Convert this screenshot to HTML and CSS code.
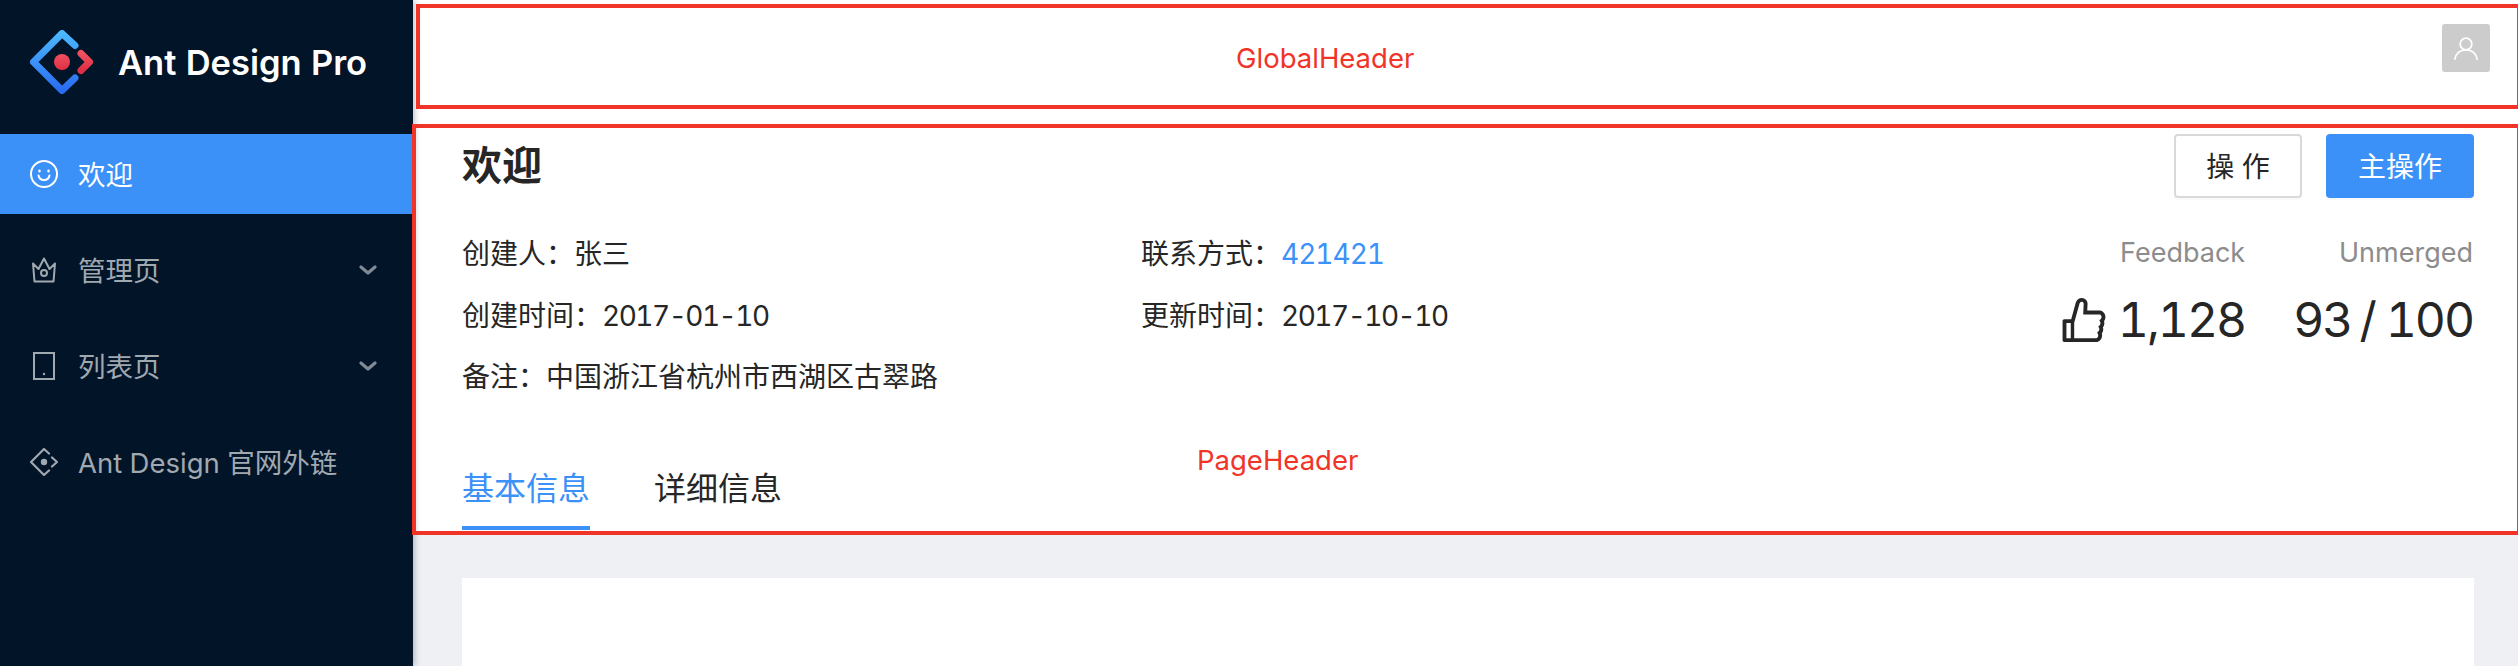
FILE: index.html
```html
<!DOCTYPE html>
<html lang="zh-CN">

<head>
  <meta charset="UTF-8">
  <title>Ant Design Pro</title>
  <link rel="stylesheet" href="styles.css">
</head>

<body>
  <div class="app">
    <aside class="sider">
      <div class="logo">
        <svg class="logo-mark" viewBox="0 0 64 64" fill="none" stroke-linecap="round" stroke-linejoin="round">
          <defs>
            <linearGradient id="logo-blue" x1="0" y1="0" x2="0" y2="1">
              <stop offset="0" stop-color="#4bb8ff" />
              <stop offset="1" stop-color="#2a6cf0" />
            </linearGradient>
            <linearGradient id="logo-red" x1="0" y1="0" x2="0" y2="1">
              <stop offset="0" stop-color="#f0505f" />
              <stop offset="1" stop-color="#dd2f45" />
            </linearGradient>
          </defs>
          <path d="M45 15.500 32 3.500 3.500 32 32 60.500 45 48" stroke="url(#logo-blue)" stroke-width="7" />
          <path d="M51 23.500 59.500 32 51 40.500" stroke="url(#logo-red)" stroke-width="7" />
          <circle cx="32" cy="32" r="8" fill="url(#logo-red)" />
        </svg>
        <span class="logo-title">Ant Design Pro</span>
      </div>
      <nav class="menu">
        <a class="menu-item selected">
          <svg class="menu-icon" viewBox="0 0 28 28" fill="none" stroke="currentColor" stroke-width="2" stroke-linecap="round">
            <circle cx="14" cy="14" r="13" />
            <path d="M8.500 15.500c.6 3 2.800 4.500 5.500 4.500s4.900-1.500 5.500-4.500" />
            <path d="M9.500 10.800v.4M18.500 10.800v.4" stroke-width="2.400" />
          </svg>
          <span class="menu-text">欢迎</span>
        </a>
        <a class="menu-item">
          <svg class="menu-icon" viewBox="0 0 28 28" fill="none" stroke="currentColor" stroke-width="2" stroke-linejoin="round">
            <path d="M3 7.500 8.500 13 14 2.500 19.500 13 25 7.500 23.500 25.500H4.500Z" />
            <circle cx="14" cy="17" r="3" />
          </svg>
          <span class="menu-text">管理页</span>
          <svg class="menu-arrow" viewBox="0 0 18 10" fill="none" stroke="currentColor" stroke-width="3.200" stroke-linecap="round" stroke-linejoin="round">
            <path d="M2 2 9 8 16 2" />
          </svg>
        </a>
        <a class="menu-item">
          <svg class="menu-icon" viewBox="0 0 28 28" fill="none" stroke="currentColor" stroke-width="2">
            <rect x="4" y="1" width="20" height="26" />
            <circle cx="14" cy="22" r="1.200" fill="currentColor" stroke="none" />
          </svg>
          <span class="menu-text">列表页</span>
          <svg class="menu-arrow" viewBox="0 0 18 10" fill="none" stroke="currentColor" stroke-width="3.200" stroke-linecap="round" stroke-linejoin="round">
            <path d="M2 2 9 8 16 2" />
          </svg>
        </a>
        <a class="menu-item">
          <svg class="menu-icon" viewBox="0 0 28 28" fill="none" stroke="currentColor" stroke-width="2.200" stroke-linecap="round" stroke-linejoin="round">
            <path d="M19 5.500 14 1 1 14 14 27 19 22.500" />
            <path d="M22 9.500 27 14 22 18.500" />
            <circle cx="14" cy="14" r="3.200" fill="currentColor" stroke="none" />
          </svg>
          <span class="menu-text">Ant Design 官网外链</span>
        </a>
      </nav>
    </aside>

    <div class="layout">
      <header class="global-header">
        <span class="avatar">
          <svg viewBox="0 0 24 24" fill="none" stroke="currentColor" stroke-width="1.500" stroke-linecap="round">
            <circle cx="12" cy="8.500" r="5" />
            <path d="M2.500 21.500c.5-4.500 4.500-8 9.500-8s9 3.500 9.500 8" />
          </svg>
        </span>
      </header>

      <section class="page-header">
        <div class="title-row">
          <h1 class="page-title">欢迎</h1>
          <div class="actions">
            <button class="btn">操 作</button>
            <button class="btn primary">主操作</button>
          </div>
        </div>
        <div class="info-row">
          <dl class="desc">
            <div>创建人：<span>张三</span></div>
            <div>联系方式：<a class="link">421421</a></div>
            <div>创建时间：<span class="date">2017-01-10</span></div>
            <div>更新时间：<span class="date">2017-10-10</span></div>
            <div class="desc-wide">备注：<span>中国浙江省杭州市西湖区古翠路</span></div>
          </dl>
          <div class="stats">
            <div class="stat">
              <div class="stat-label">Feedback</div>
              <div class="stat-value">
                <svg class="like" viewBox="64 64 896 896" fill="currentColor">
                  <path d="M885.9 533.7c16.8-22.2 26.1-49.4 26.1-77.7 0-44.9-25.1-87.4-65.5-111.1a67.67 67.67 0 0 0-34.3-9.3H572.4l6-122.9c1.4-29.7-9.1-57.9-29.5-79.4A106.62 106.62 0 0 0 471 99.9c-52 0-98 35-111.8 85.1l-85.9 311H144c-17.7 0-32 14.3-32 32v364c0 17.7 14.3 32 32 32h601.3c9.2 0 18.2-1.8 26.5-5.4 47.6-20.3 78.3-66.8 78.3-118.4 0-12.6-1.8-25-5.4-37 16.8-22.2 26.1-49.4 26.1-77.7 0-12.6-1.8-25-5.4-37 16.8-22.2 26.1-49.4 26.1-77.7-.2-12.6-2-25.1-5.6-37.1zM184 852V568h81v284h-81zm636.4-353l-21.9 19 13.9 25.4a56.2 56.2 0 0 1 6.9 27.3c0 16.5-7.2 32.2-19.6 43l-21.9 19 13.9 25.4a56.2 56.2 0 0 1 6.9 27.3c0 16.5-7.2 32.2-19.6 43l-21.9 19 13.9 25.4a56.2 56.2 0 0 1 6.9 27.3c0 22.4-13.2 42.6-33.6 51.8H329V564.8l99.5-360.5a44.1 44.1 0 0 1 42.2-32.3c7.6 0 15.1 2.2 21.1 6.7 9.9 7.4 15.2 18.6 14.6 30.5l-9.6 198.4h314.4C829 418.5 840 436.9 840 456c0 16.5-7.2 32.1-19.6 43z" />
                </svg>
                1,128
              </div>
            </div>
            <div class="stat">
              <div class="stat-label">Unmerged</div>
              <div class="stat-value">93<span class="stat-suffix">/ 100</span></div>
            </div>
          </div>
        </div>
        <div class="tabs">
          <a class="tab active">基本信息</a>
          <a class="tab">详细信息</a>
        </div>
      </section>

      <main class="content">
        <div class="card"></div>
      </main>
    </div>

    <!-- red annotation frames drawn over the screenshot -->
    <div class="note note-global"><span class="note-label">GlobalHeader</span></div>
    <div class="note note-page"><span class="note-label">PageHeader</span></div>
  </div>
</body>

</html>
```

FILE: styles.css
```css
* {
  box-sizing: border-box;
}

html,
body {
  margin: 0;
  height: 100%;
  overflow: hidden;
}

body {
  font-family: Inter, "Noto Sans CJK SC", sans-serif;
  font-size: 28px;
  font-feature-settings: "tnum";
  color: #262626;
  background: #fff;
}

.app {
  position: relative;
  display: flex;
  height: 666px;
  overflow: hidden;
}

/* Sidebar */
.sider {
  position: relative;
  z-index: 1;
  flex: 0 0 413px;
  background: #021428;
  box-shadow: 2px 0 6px rgb(0 21 41 / 0.25);
}

.logo {
  display: flex;
  align-items: center;
  gap: 24px;
  height: 124px;
  padding-left: 30px;
}

.logo-mark {
  width: 64px;
  height: 64px;
}

.logo-title {
  font-size: 34.500px;
  font-weight: 600;
  color: #fff;
}

.menu {
  display: flex;
  flex-direction: column;
  gap: 16px;
  margin-top: 10px;
}

.menu-item {
  display: flex;
  align-items: center;
  gap: 20px;
  height: 80px;
  padding: 0 36px 0 30px;
  font-size: 27.500px;
  color: #a0a8b0;
}

.menu-item.selected {
  background: #3b91f8;
  color: #fff;
}

.menu-text {
  padding-bottom: 3px;
}

.menu-icon {
  flex: none;
  width: 28px;
  height: 28px;
}

.menu-arrow {
  width: 18px;
  height: 10px;
  margin-left: auto;
  color: #7f8a95;
}

/* Main column */
.layout {
  flex: 1;
  display: flex;
  flex-direction: column;
  min-width: 0;
}

.global-header {
  display: flex;
  justify-content: flex-end;
  align-items: center;
  height: 94px;
  padding: 0 28px 0 0;
  background: #fff;
  box-shadow: 0 2px 8px rgb(0 21 41 / 0.06);
}

.avatar {
  display: flex;
  align-items: center;
  justify-content: center;
  width: 48px;
  height: 48px;
  margin-top: 2px;
  border-radius: 3px;
  background: #ccc;
  color: #fff;
}

.avatar svg {
  width: 28px;
  height: 28px;
}

.page-header {
  display: flex;
  flex-direction: column;
  height: 441px;
  padding: 40px 44px 5px 49px;
  background: #fff;
}

.title-row {
  display: flex;
  justify-content: space-between;
  align-items: center;
  height: 64px;
}

.page-title {
  margin: -6px 0 0;
  font-size: 40px;
  font-weight: 600;
}

.actions {
  display: flex;
  gap: 24px;
}

.btn {
  height: 64px;
  width: 128px;
  padding: 0 0 3px;
  font: inherit;
  color: #262626;
  background: #fff;
  border: 2px solid #d9d9d9;
  border-radius: 4px;
  box-shadow: 0 2px 0 rgb(0 0 0 / 0.02);
}

.btn.primary {
  width: 148px;
  color: #fff;
  background: #3b91f8;
  border-color: #3b91f8;
}

.info-row {
  display: flex;
  justify-content: space-between;
  margin-top: 26px;
}

.desc {
  display: grid;
  grid-template-columns: 679px 400px;
  margin: 0;
  line-height: 61.500px;
}

.desc-wide {
  grid-column: 1 / -1;
}

.date {
  letter-spacing: -1.500px;
}

.link {
  letter-spacing: -1px;
  color: #3b91f8;
}

.stats {
  display: flex;
  gap: 48px;
  padding-right: 1px;
}

.stat {
  text-align: right;
}

.stat-label {
  line-height: 58px;
  font-size: 27px;
  color: #8c8c8c;
}

.stat-value {
  display: flex;
  align-items: center;
  justify-content: flex-end;
  gap: 10px;
  line-height: 75px;
  font-size: 48px;
  letter-spacing: -2px;
}

.like {
  width: 48px;
  height: 48px;
}

.stat-suffix {
  margin-left: -2px;
}

.tabs {
  display: flex;
  gap: 64px;
  margin-top: auto;
}

.tab {
  padding-bottom: 17px;
  font-size: 32px;
  line-height: 41px;
  border-bottom: 4px solid transparent;
}

.tab.active {
  color: #3b91f8;
  border-bottom-color: #3b91f8;
}

.content {
  flex: 1;
  padding: 43px 44px 0 49px;
  background: #eff0f4;
}

.card {
  height: 100%;
  background: #fff;
}

/* Annotations */
.note {
  position: absolute;
  z-index: 2;
  display: flex;
  justify-content: center;
  border: 4px solid #f03428;
}

.note-global {
  top: 4px;
  left: 416px;
  right: -3px;
  height: 105px;
}

.note-page {
  top: 124px;
  left: 412px;
  right: -3px;
  height: 411px;
}

.note-label {
  position: absolute;
  font-size: 27.500px;
  color: #f03428;
}

.note-global .note-label {
  top: 33px;
  left: 816px;
}

.note-page .note-label {
  top: 315px;
  left: 781px;
}
```
